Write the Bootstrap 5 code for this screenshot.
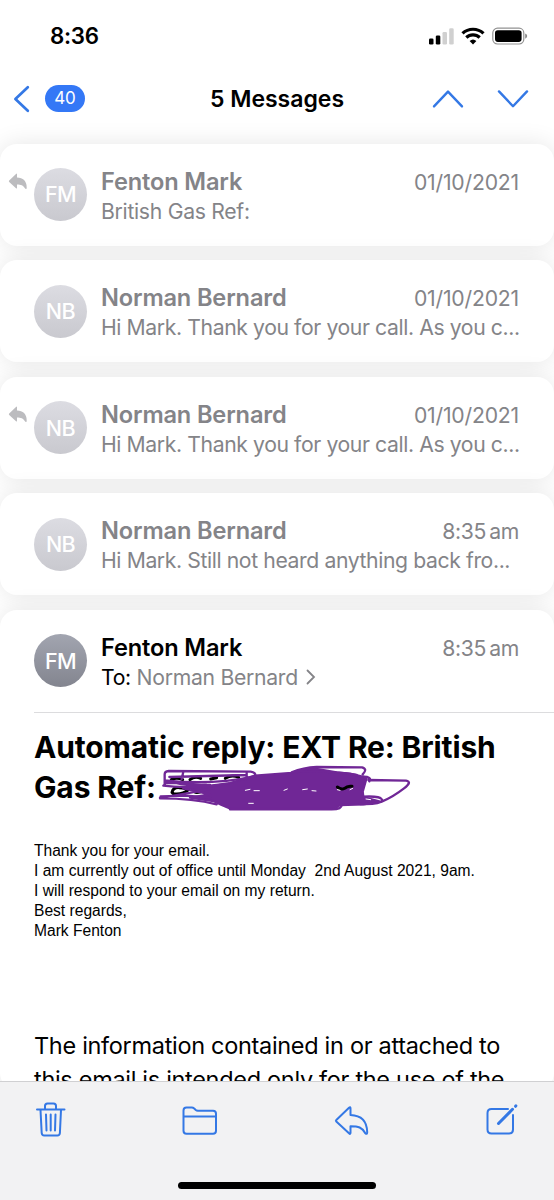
<!DOCTYPE html>
<html lang="en">
<head>
<meta charset="utf-8">
<meta name="viewport" content="width=device-width, initial-scale=1">
<title>5 Messages</title>
<link href="https://cdn.jsdelivr.net/npm/bootstrap@5.3.0/dist/css/bootstrap.min.css" rel="stylesheet">
<style>
html,body{height:1200px;overflow:hidden}
body{font-family:Inter,"Liberation Sans",sans-serif;background:#fff;color:#000}
svg{display:block;flex:none;overflow:visible}
.screen{width:554px;height:1200px;overflow:hidden}
.status-bar{height:72px;padding:0 27px 1px 50px}
.clock{font-size:22.3px;font-weight:600;line-height:28px;letter-spacing:-.3px}
.title-bar{height:71.6px;padding:0 25px 18px 13px}
.unread{width:40px;height:27px;background:#3478f6;color:#fff;font-size:17px;line-height:27px;margin-left:15px}
.heading{font-size:23px;font-weight:600;letter-spacing:0;line-height:28px}
.thread{gap:14.6px}
.mail{background:#fff;border-radius:17px;box-shadow:0 0 24px rgba(0,0,0,.1);padding:24px 35px 0 8px;height:102px}
.mail.open{height:480px;padding:0}
.mail.open .top{padding:24px 35px 0 8px;height:102px}
.mark-col{width:26px;padding-top:5px}
.avatar{width:53px;height:53px;margin-top:.5px;font-size:21.5px;font-weight:500;letter-spacing:-.6px;color:#fff;background:linear-gradient(#dcdce2,#c9c9cf)}
.open .avatar{background:linear-gradient(#a2a5b0,#83858f)}
.info{margin-left:14px;min-width:0}
.sender{font-size:23.6px;font-weight:600;line-height:28px;color:#848488;letter-spacing:-.15px}
.open .sender{color:#000}
.when,.preview{font-size:21.2px;line-height:29px;color:#848488;letter-spacing:-.2px;white-space:pre}
.when.time{letter-spacing:-.4px}
.preview{letter-spacing:-.4px}
.preview.short{letter-spacing:-.3px}
.subject{font-size:30px;font-weight:700;line-height:39.5px;letter-spacing:-.15px;margin:15.4px 0 0 34px}
.rule{height:1px;background:#dcdcde;margin-left:34px}
.redacted{left:125px;top:38px}
.note{font:15.6px/20px "Liberation Sans",Arial,sans-serif;margin:34px 0 0 34px;white-space:pre}
.legal{font-size:23.5px;line-height:33.5px;margin:88px 0 0 34px;white-space:pre;letter-spacing:-.31px}
.toolbar{height:119px;background:#f2f2f3;border-top:1px solid #d0d0d2;padding:20px 36px 0}
.home-line{width:198px;height:7px;border-radius:4px;background:#000;margin:44px auto 0}
.toolbar svg,.title-bar svg{fill:none;stroke:#3478e5;stroke-width:2;stroke-linecap:round;stroke-linejoin:round}
</style>
</head>
<body>
<div class="screen d-flex flex-column">
  <header>
    <div class="status-bar d-flex align-items-center">
      <span class="clock">8:36</span>
      <div class="d-flex align-items-center ms-auto">
        <svg width="98" height="18" viewBox="0 0 98 18">
          <rect x="0" y="11.5" width="4.5" height="6" rx="1.3"/><rect x="6.8" y="8.5" width="4.5" height="9" rx="1.3"/>
          <rect x="13.5" y="5" width="4.5" height="12.5" rx="1.3" fill="#d0d0d0"/><rect x="20.2" y="1.2" width="4.500" height="16.3" rx="1.3" fill="#d0d0d0"/>
          <g fill="none" stroke="#000" stroke-width="3.2"><path d="M33.5 6.4a15.3 15.3 0 0 1 21 0"/><path d="M37.3 10.5a9.7 9.7 0 0 1 13.4 0"/></g>
          <path d="M44 17.5l-3.4-3.4a5 5 0 0 1 6.8 0z"/>
          <rect x="63.8" y="1.2" width="31" height="15.8" rx="4.7" fill="none" stroke="#929292" stroke-width="1.2"/>
          <rect x="66" y="3.3" width="26.6" height="11.6" rx="2.8"/><path d="M96.2 6.5q2 .8 2 2.6t-2 2.6z" fill="#888"/>
        </svg>
      </div>
    </div>
    <nav class="title-bar d-flex align-items-center position-relative">
      <svg width="17" height="28" viewBox="0 0 17 28" style="stroke-width:2.7"><path d="M14.8 2.2L2.4 14l12.4 11.8"/></svg>
      <span class="unread rounded-pill text-center">40</span>
      <span class="heading position-absolute start-50 translate-middle-x">5 Messages</span>
      <div class="d-flex ms-auto" style="gap:33px">
        <svg width="32" height="20" viewBox="0 0 32 20" style="stroke-width:2.4"><path d="M2 17.4L16 2.600l14 14.800"/></svg>
        <svg width="32" height="20" viewBox="0 0 32 20" style="stroke-width:2.4"><path d="M2 2.400l14 14.800L30 2.400"/></svg>
      </div>
    </nav>
  </header>

  <main class="thread d-flex flex-column">
    <article class="mail d-flex flex-shrink-0">
      <div class="mark-col"><svg width="20" height="18" viewBox="0 0 20 18" fill="#bcbcbf"><path d="M9 1.3Q9 .1 8 1L1.2 7.6q-.7.7 0 1.4L8 15.2q1 .9 1-.4v-3.3c4 0 6 .8 8.2 4q1.5 1.5 1.5-1C18.700 8 15 4.800 9 4.600z"/></svg></div>
      <div class="avatar rounded-circle d-flex align-items-center justify-content-center flex-shrink-0">FM</div>
      <div class="info flex-grow-1">
        <div class="d-flex justify-content-between"><span class="sender">Fenton Mark</span><span class="when">01/10/2021</span></div>
        <div class="preview short">British Gas Ref:</div>
      </div>
    </article>
    <article class="mail d-flex flex-shrink-0">
      <div class="mark-col"></div>
      <div class="avatar rounded-circle d-flex align-items-center justify-content-center flex-shrink-0">NB</div>
      <div class="info flex-grow-1">
        <div class="d-flex justify-content-between"><span class="sender">Norman Bernard</span><span class="when">01/10/2021</span></div>
        <div class="preview">Hi Mark. Thank you for your call. As you c...</div>
      </div>
    </article>
    <article class="mail d-flex flex-shrink-0">
      <div class="mark-col"><svg width="20" height="18" viewBox="0 0 20 18" fill="#bcbcbf"><path d="M9 1.3Q9 .1 8 1L1.2 7.6q-.7.7 0 1.4L8 15.2q1 .9 1-.4v-3.3c4 0 6 .8 8.2 4q1.5 1.5 1.5-1C18.700 8 15 4.800 9 4.600z"/></svg></div>
      <div class="avatar rounded-circle d-flex align-items-center justify-content-center flex-shrink-0">NB</div>
      <div class="info flex-grow-1">
        <div class="d-flex justify-content-between"><span class="sender">Norman Bernard</span><span class="when">01/10/2021</span></div>
        <div class="preview">Hi Mark. Thank you for your call. As you c...</div>
      </div>
    </article>
    <article class="mail d-flex flex-shrink-0">
      <div class="mark-col"></div>
      <div class="avatar rounded-circle d-flex align-items-center justify-content-center flex-shrink-0">NB</div>
      <div class="info flex-grow-1">
        <div class="d-flex justify-content-between"><span class="sender">Norman Bernard</span><span class="when time">8:35&#8201;am</span></div>
        <div class="preview">Hi Mark. Still not heard anything back fro...</div>
      </div>
    </article>
    <article class="mail open flex-shrink-0">
      <div class="top d-flex">
        <div class="mark-col"></div>
        <div class="avatar rounded-circle d-flex align-items-center justify-content-center flex-shrink-0">FM</div>
        <div class="info flex-grow-1">
          <div class="d-flex justify-content-between"><span class="sender">Fenton Mark</span><span class="when time">8:35&#8201;am</span></div>
          <div class="preview short d-flex align-items-center"><span class="text-black">To: </span><span class="to-name">Norman Bernard</span><svg class="ms-2" width="10" height="16" viewBox="0 0 10 16" fill="none" stroke="#848488" stroke-width="1.8" stroke-linecap="round"><path d="M1.5 1.500L8 8l-6.500 6.500"/></svg></div>
        </div>
      </div>
      <div class="rule"></div>
      <div class="subject position-relative"><div class="line-one">Automatic reply: EXT Re: British</div><div class="line-two">Gas Ref:</div>
        <svg class="redacted position-absolute" width="252" height="44" viewBox="27 33 756 132" fill="none" stroke="#702796" stroke-width="7" stroke-linejoin="round" stroke-linecap="round">
          <g stroke="#000" stroke-width="9"><path d="M64 74q16-9 34 0M120 74q14-12 32-4M182 72l18-4M226 70q18-12 40-3"/><path d="M66 112q4-16 22-14q22 2 28 6q-20 16-46 12zM130 104q14-8 30 0q-10 10-24 8M172 104l16-6"/></g>
          <path fill="#702796" d="M100 100L170 96 235 86 315 62 425 54 490 40 560 52 600 56 650 68 638 110 640 126 690 140 640 148 570 150 555 160H240L215 150 190 138 120 128 180 118z"/>
          <path d="M44 92V58Q44 49 56 48L302 50Q318 52 316 64M100 50L95 72M58 66L288 60M290 54v18M45 76Q180 92 315 64M40 92Q120 103 235 85M44 84L170 82M30 128Q100 118 190 100M30 130Q130 130 200 148M32 124L110 122 180 128M80 84Q110 92 180 90"/>
          <path d="M425 52Q460 38 500 36L636 37Q654 42 638 58M440 50Q540 46 620 60M640 65q26 0 18 14M655 75L768 77Q788 80 762 100Q730 125 695 140M640 125Q700 122 696 138Q690 149 630 147M240 163H545Q575 163 575 150"/>
          <path stroke="#000" stroke-width="9" d="M562 96q12 10 22 4q8-8 22-6"/>
          <g stroke="#fff" stroke-width="3"><path d="M286 106l14-3M312 107h16M402 106l10-4M458 104l14-2M486 107l12 1M296 145h14M562 104l8 2M600 104l8-4M648 132l14 2"/></g>
        </svg>
      </div>
      <div class="note">Thank you for your email.
I am currently out of office until Monday  2nd August 2021, 9am.
I will respond to your email on my return.
Best regards,
Mark Fenton</div>
      <div class="legal"><div class="legal-one">The information contained in or attached to</div><div class="legal-two">this email is intended only for the use of the</div></div>
    </article>
  </main>

  <footer class="toolbar position-fixed bottom-0 start-0 w-100">
    <div class="d-flex justify-content-between">
      <svg width="30" height="36" viewBox="0 0 30 36"><path d="M1 7.500h27.500M9 7V4q0-2.500 2.500-2.500h6Q20 1.500 20 4v3M4.500 8l1.200 23q.2 2.500 2.500 2.500h13.200q2.300 0 2.500-2.500L25 8M10 12.500l.5 16M14.700 12.500v16M19.500 12.500l-.5 16"/></svg>
      <svg width="36" height="36" viewBox="0 0 36 36"><path d="M1.500 29V8.500q0-3 3-3h5.300q1.200 0 2.400 1l1.600 1.500q.8.700 2 .7H31q3 0 3 3v17q0 3-3 3H4.500q-3 0-3-3zM1.500 14.500H34"/></svg>
      <svg width="36" height="36" viewBox="0 0 36 36"><path d="M16.500 6.400q0-2-1.500-.6L2.300 18q-.8.800 0 1.600L15 31.300q1.500 1.400 1.500-.6v-6.400c8 0 11.500 1 14.800 6.900q1.900 1.700 1.900-1C33 19 27 13.400 16.500 13z"/></svg>
      <svg width="32" height="36" viewBox="0 0 32 36"><path d="M22 7H5.500q-4 0-4 4v16.500q0 4 4 4H23q4 0 4-4V13"/><path d="M12.500 21.500L26.500 7.300" stroke-width="3"/><path d="M29.500 4.300l.4-.4" stroke-width="3"/></svg>
    </div>
    <div class="home-line"></div>
  </footer>
</div>
<script src="https://cdn.jsdelivr.net/npm/bootstrap@5.3.0/dist/js/bootstrap.bundle.min.js"></script>
</body>
</html>
